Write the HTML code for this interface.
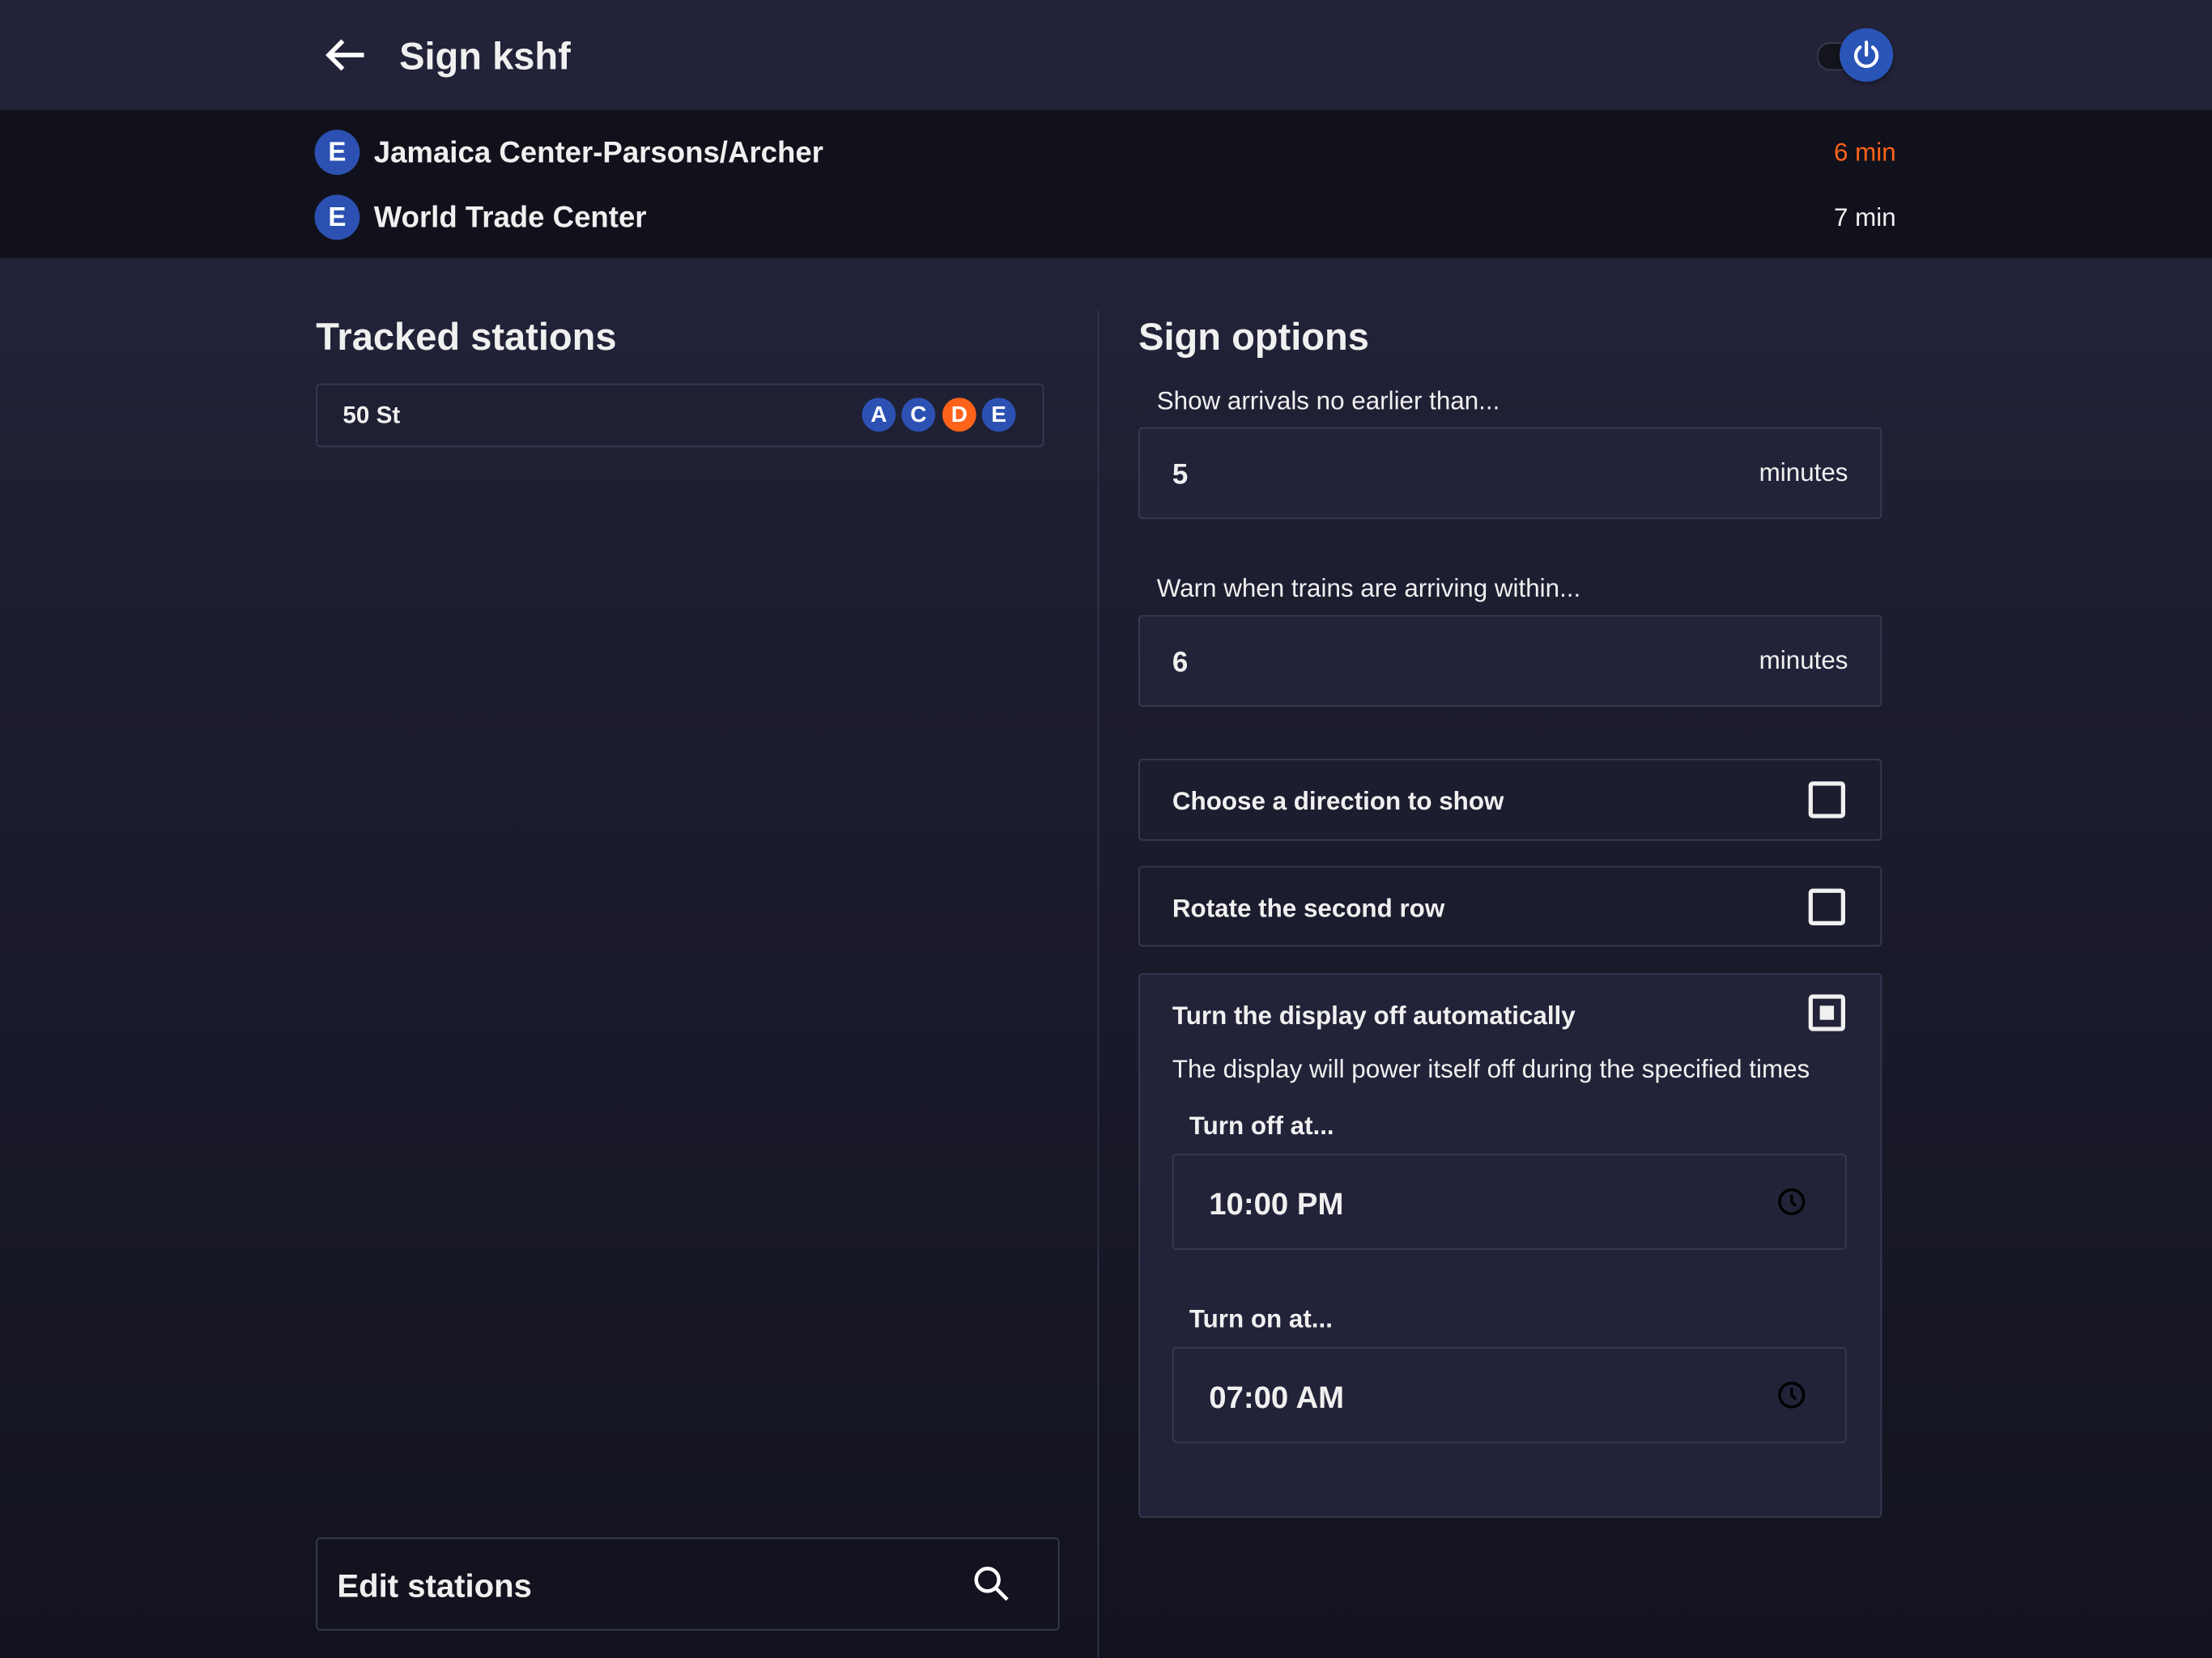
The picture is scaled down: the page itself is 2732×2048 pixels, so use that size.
<!DOCTYPE html>
<html><head><meta charset="utf-8"><style>
html,body{margin:0;padding:0;width:2732px;height:2048px;overflow:hidden;background:#13131f}
#w{position:absolute;left:0;top:0;width:1568px;height:1175px;transform:scale(1.74235);transform-origin:0 0;font-family:"Liberation Sans",sans-serif;color:#f0f0f0;background:linear-gradient(#222339 183px,#1d1e31 400px,#13131f 1175px)}
.a{position:absolute}
.b{font-weight:bold}
.box{position:absolute;border:1px solid #3a3b52;border-radius:3px;box-sizing:border-box}
.bul{position:absolute;border-radius:50%;background:#2c51b3;color:#fff;font-weight:bold;text-align:center}
.cb{position:absolute;width:26px;height:26px;border:3px solid #f0f0f0;border-radius:3px;box-sizing:border-box}
</style></head><body><div id="w">
<div class="a" style="left:0;top:0;width:1568px;height:78px;background:#222339"></div>
<svg class="a" style="left:229px;top:26px" width="32" height="26" viewBox="0 0 32 26"><path d="M29 13H5M14 3L4 13l10 10" stroke="#fff" stroke-width="3.2" fill="none"/></svg>
<div class="a b" style="left:283px;top:25px;font-size:27px">Sign kshf</div>
<div class="a" style="left:1288px;top:30px;width:36px;height:18px;border-radius:9px;background:#14141d;border:1px solid #3a3b52"></div>
<div class="a" style="left:1304px;top:20px;width:38px;height:38px;border-radius:50%;background:#2a55b8;box-shadow:0 1px 3px rgba(0,0,0,.5)"></div>
<svg class="a" style="left:1311px;top:27px" width="24" height="24" viewBox="0 0 24 24"><path d="M7.5 6.5a7.5 7.5 0 1 0 9 0M12 3v9" stroke="#fff" stroke-width="2.4" fill="none" stroke-linecap="round"/></svg>
<div class="a" style="left:0;top:78px;width:1568px;height:105px;background:#11111b"></div>
<div class="bul" style="left:223px;top:92px;width:32px;height:32px;line-height:33px;font-size:19px">E</div>
<div class="a b" style="left:265px;top:97px;font-size:21px">Jamaica Center-Parsons/Archer</div>
<div class="a" style="right:224px;top:98px;font-size:18px;color:#ff6319">6 min</div>
<div class="bul" style="left:223px;top:138px;width:32px;height:32px;line-height:33px;font-size:19px">E</div>
<div class="a b" style="left:265px;top:143px;font-size:21px">World Trade Center</div>
<div class="a" style="right:224px;top:144px;font-size:18px">7 min</div>

<div class="a b" style="left:224px;top:224px;font-size:27px">Tracked stations</div>
<div class="box" style="left:224px;top:272px;width:516px;height:45px;background:#1f2033"></div>
<div class="a b" style="left:243px;top:285px;font-size:17px">50 St</div>
<div class="bul" style="left:611px;top:282px;width:24px;height:24px;line-height:25px;font-size:16px">A</div>
<div class="bul" style="left:639px;top:282px;width:24px;height:24px;line-height:25px;font-size:16px">C</div>
<div class="bul" style="left:668px;top:282px;width:24px;height:24px;line-height:25px;font-size:16px;background:#ff6319">D</div>
<div class="bul" style="left:696px;top:282px;width:24px;height:24px;line-height:25px;font-size:16px">E</div>
<div class="a" style="left:778px;top:220px;width:1px;height:955px;background:#34354a"></div>

<div class="box" style="left:224px;top:1090px;width:527px;height:66px;background:#13131f"></div>
<div class="a b" style="left:239px;top:1111px;font-size:23px">Edit stations</div>
<svg class="a" style="left:688px;top:1108px" width="30" height="30" viewBox="0 0 30 30"><circle cx="12" cy="12" r="8" stroke="#fff" stroke-width="2.6" fill="none"/><path d="M18 18l8 8" stroke="#fff" stroke-width="2.6"/></svg>

<div class="a b" style="left:807px;top:224px;font-size:27px">Sign options</div>
<div class="a" style="left:820px;top:274px;font-size:18px">Show arrivals no earlier than...</div>
<div class="box" style="left:807px;top:303px;width:527px;height:65px;background:#222339"></div>
<div class="a b" style="left:831px;top:326px;font-size:20px">5</div>
<div class="a" style="right:258px;top:325px;font-size:18px">minutes</div>
<div class="a" style="left:820px;top:407px;font-size:18px">Warn when trains are arriving within...</div>
<div class="box" style="left:807px;top:436px;width:527px;height:65px;background:#222339"></div>
<div class="a b" style="left:831px;top:459px;font-size:20px">6</div>
<div class="a" style="right:258px;top:458px;font-size:18px">minutes</div>

<div class="box" style="left:807px;top:538px;width:527px;height:58px;background:#1c1d2f"></div>
<div class="a b" style="left:831px;top:558px;font-size:18px">Choose a direction to show</div>
<div class="cb" style="left:1282px;top:554px"></div>
<div class="box" style="left:807px;top:614px;width:527px;height:57px;background:#1b1c2d"></div>
<div class="a b" style="left:831px;top:634px;font-size:18px">Rotate the second row</div>
<div class="cb" style="left:1282px;top:630px"></div>

<div class="box" style="left:807px;top:690px;width:527px;height:386px;background:#222339"></div>
<div class="a b" style="left:831px;top:710px;font-size:18px">Turn the display off automatically</div>
<div class="cb" style="left:1282px;top:705px"><div style="position:absolute;left:5px;top:5px;width:10px;height:10px;background:#f0f0f0"></div></div>
<div class="a" style="left:831px;top:748px;font-size:18px">The display will power itself off during the specified times</div>
<div class="a b" style="left:843px;top:788px;font-size:18px">Turn off at...</div>
<div class="box" style="left:831px;top:818px;width:478px;height:68px;background:#222339"></div>
<div class="a b" style="left:857px;top:841px;font-size:22px">10:00 PM</div>
<svg class="a" style="left:1259px;top:841px" width="22" height="22" viewBox="0 0 22 22"><circle cx="11" cy="11" r="8.5" stroke="#000" stroke-width="2" fill="none"/><path d="M11 6v5l3 3" stroke="#000" stroke-width="2" fill="none"/></svg>
<div class="a b" style="left:843px;top:925px;font-size:18px">Turn on at...</div>
<div class="box" style="left:831px;top:955px;width:478px;height:68px;background:#222339"></div>
<div class="a b" style="left:857px;top:978px;font-size:22px">07:00 AM</div>
<svg class="a" style="left:1259px;top:978px" width="22" height="22" viewBox="0 0 22 22"><circle cx="11" cy="11" r="8.5" stroke="#000" stroke-width="2" fill="none"/><path d="M11 6v5l3 3" stroke="#000" stroke-width="2" fill="none"/></svg>
</div></body></html>
